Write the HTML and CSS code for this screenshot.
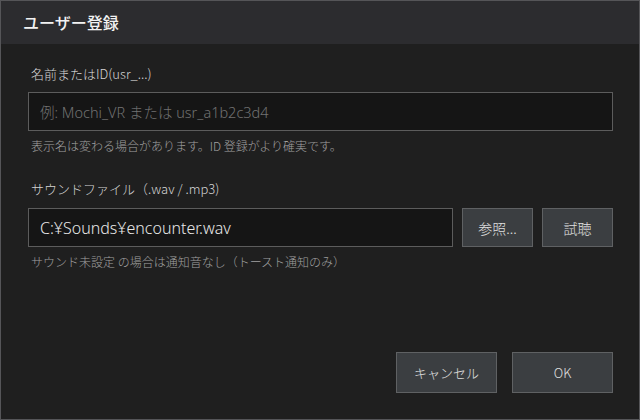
FILE: index.html
```html
<!DOCTYPE html>
<html lang="ja">
<head>
<meta charset="utf-8">
<title>ユーザー登録</title>
<link rel="stylesheet" href="styles.css">
</head>
<body>
<div class="window">
  <div class="titlebar">ユーザー登録</div>
  <div class="content">
    <div class="label">名前またはID(usr_...)</div>
    <input class="field field-full" type="text" placeholder="例: Mochi_VR または usr_a1b2c3d4">
    <div class="hint">表示名は変わる場合があります。ID 登録がより確実です。</div>

    <div class="label label-second">サウンドファイル（.wav / .mp3)</div>
    <div class="row">
      <input class="field field-grow" type="text" value="C:¥Sounds¥encounter.wav">
      <button class="btn btn-small">参照...</button>
      <button class="btn btn-small">試聴</button>
    </div>
    <div class="hint">サウンド未設定 の場合は通知音なし（トースト通知のみ）</div>

    <div class="footer">
      <button class="btn btn-large">キャンセル</button>
      <button class="btn btn-large">OK</button>
    </div>
  </div>
</div>
</body>
</html>
```

FILE: styles.css
```css
* { box-sizing: border-box; }
html, body { margin: 0; padding: 0; background: #1f1f1f; }
body {
  font-family: "Noto Sans", "Noto Sans CJK JP", sans-serif;
}
.window {
  width: 640px;
  height: 420px;
  border: 1px solid #555558;
  background: #1f1f1f;
  display: flex;
  flex-direction: column;
}
.titlebar {
  height: 43px;
  line-height: 43px;
  background: #2c2c2f;
  color: #f2f2f2;
  font-family: "Noto Sans CJK JP", sans-serif;
  font-size: 16px;
  font-weight: 500;
  padding-left: 22px;
}
.content {
  flex: 1;
  display: flex;
  flex-direction: column;
  padding: 20px 26px 26px 27px;
}
.label {
  font-family: "Noto Sans CJK JP", sans-serif;
  font-size: 13px;
  font-weight: 300;
  line-height: 20px;
  color: #d4d4d4;
  padding-left: 3px;
}
.label-second { margin-top: 24px; }
.field {
  height: 39px;
  background: #151515;
  border: 1px solid #5c5c5c;
  color: #e8e8e8;
  font-family: "Noto Sans", "Noto Sans CJK JP", sans-serif;
  font-size: 16px;
  font-weight: 300;
  padding: 0 11px;
  outline: none;
  margin: 0;
}
.field::placeholder { color: #727272; font-size: 14.5px; font-weight: 300; }
.field-full { width: 100%; margin-top: 8px; }
.field-grow { flex: 1; min-width: 0; }
.hint {
  font-family: "Noto Sans CJK JP", sans-serif;
  font-size: 12px;
  font-weight: 300;
  line-height: 18px;
  color: #a0a0a0;
  margin-top: 6px;
  padding-left: 3px;
}
.row {
  display: flex;
  gap: 9px;
  margin-top: 9px;
}
.btn {
  background: #3b3e41;
  border: 1px solid #5f6163;
  color: #e0e0e0;
  font-family: "Noto Sans CJK JP", sans-serif;
  font-size: 14px;
  font-weight: 300;
  padding: 0;
  margin: 0;
}
.btn-small { width: 71px; height: 39px; }
.btn-large { width: 101px; height: 41px; font-size: 13px; }
.footer {
  margin-top: auto;
  display: flex;
  justify-content: flex-end;
  gap: 15px;
}
```
